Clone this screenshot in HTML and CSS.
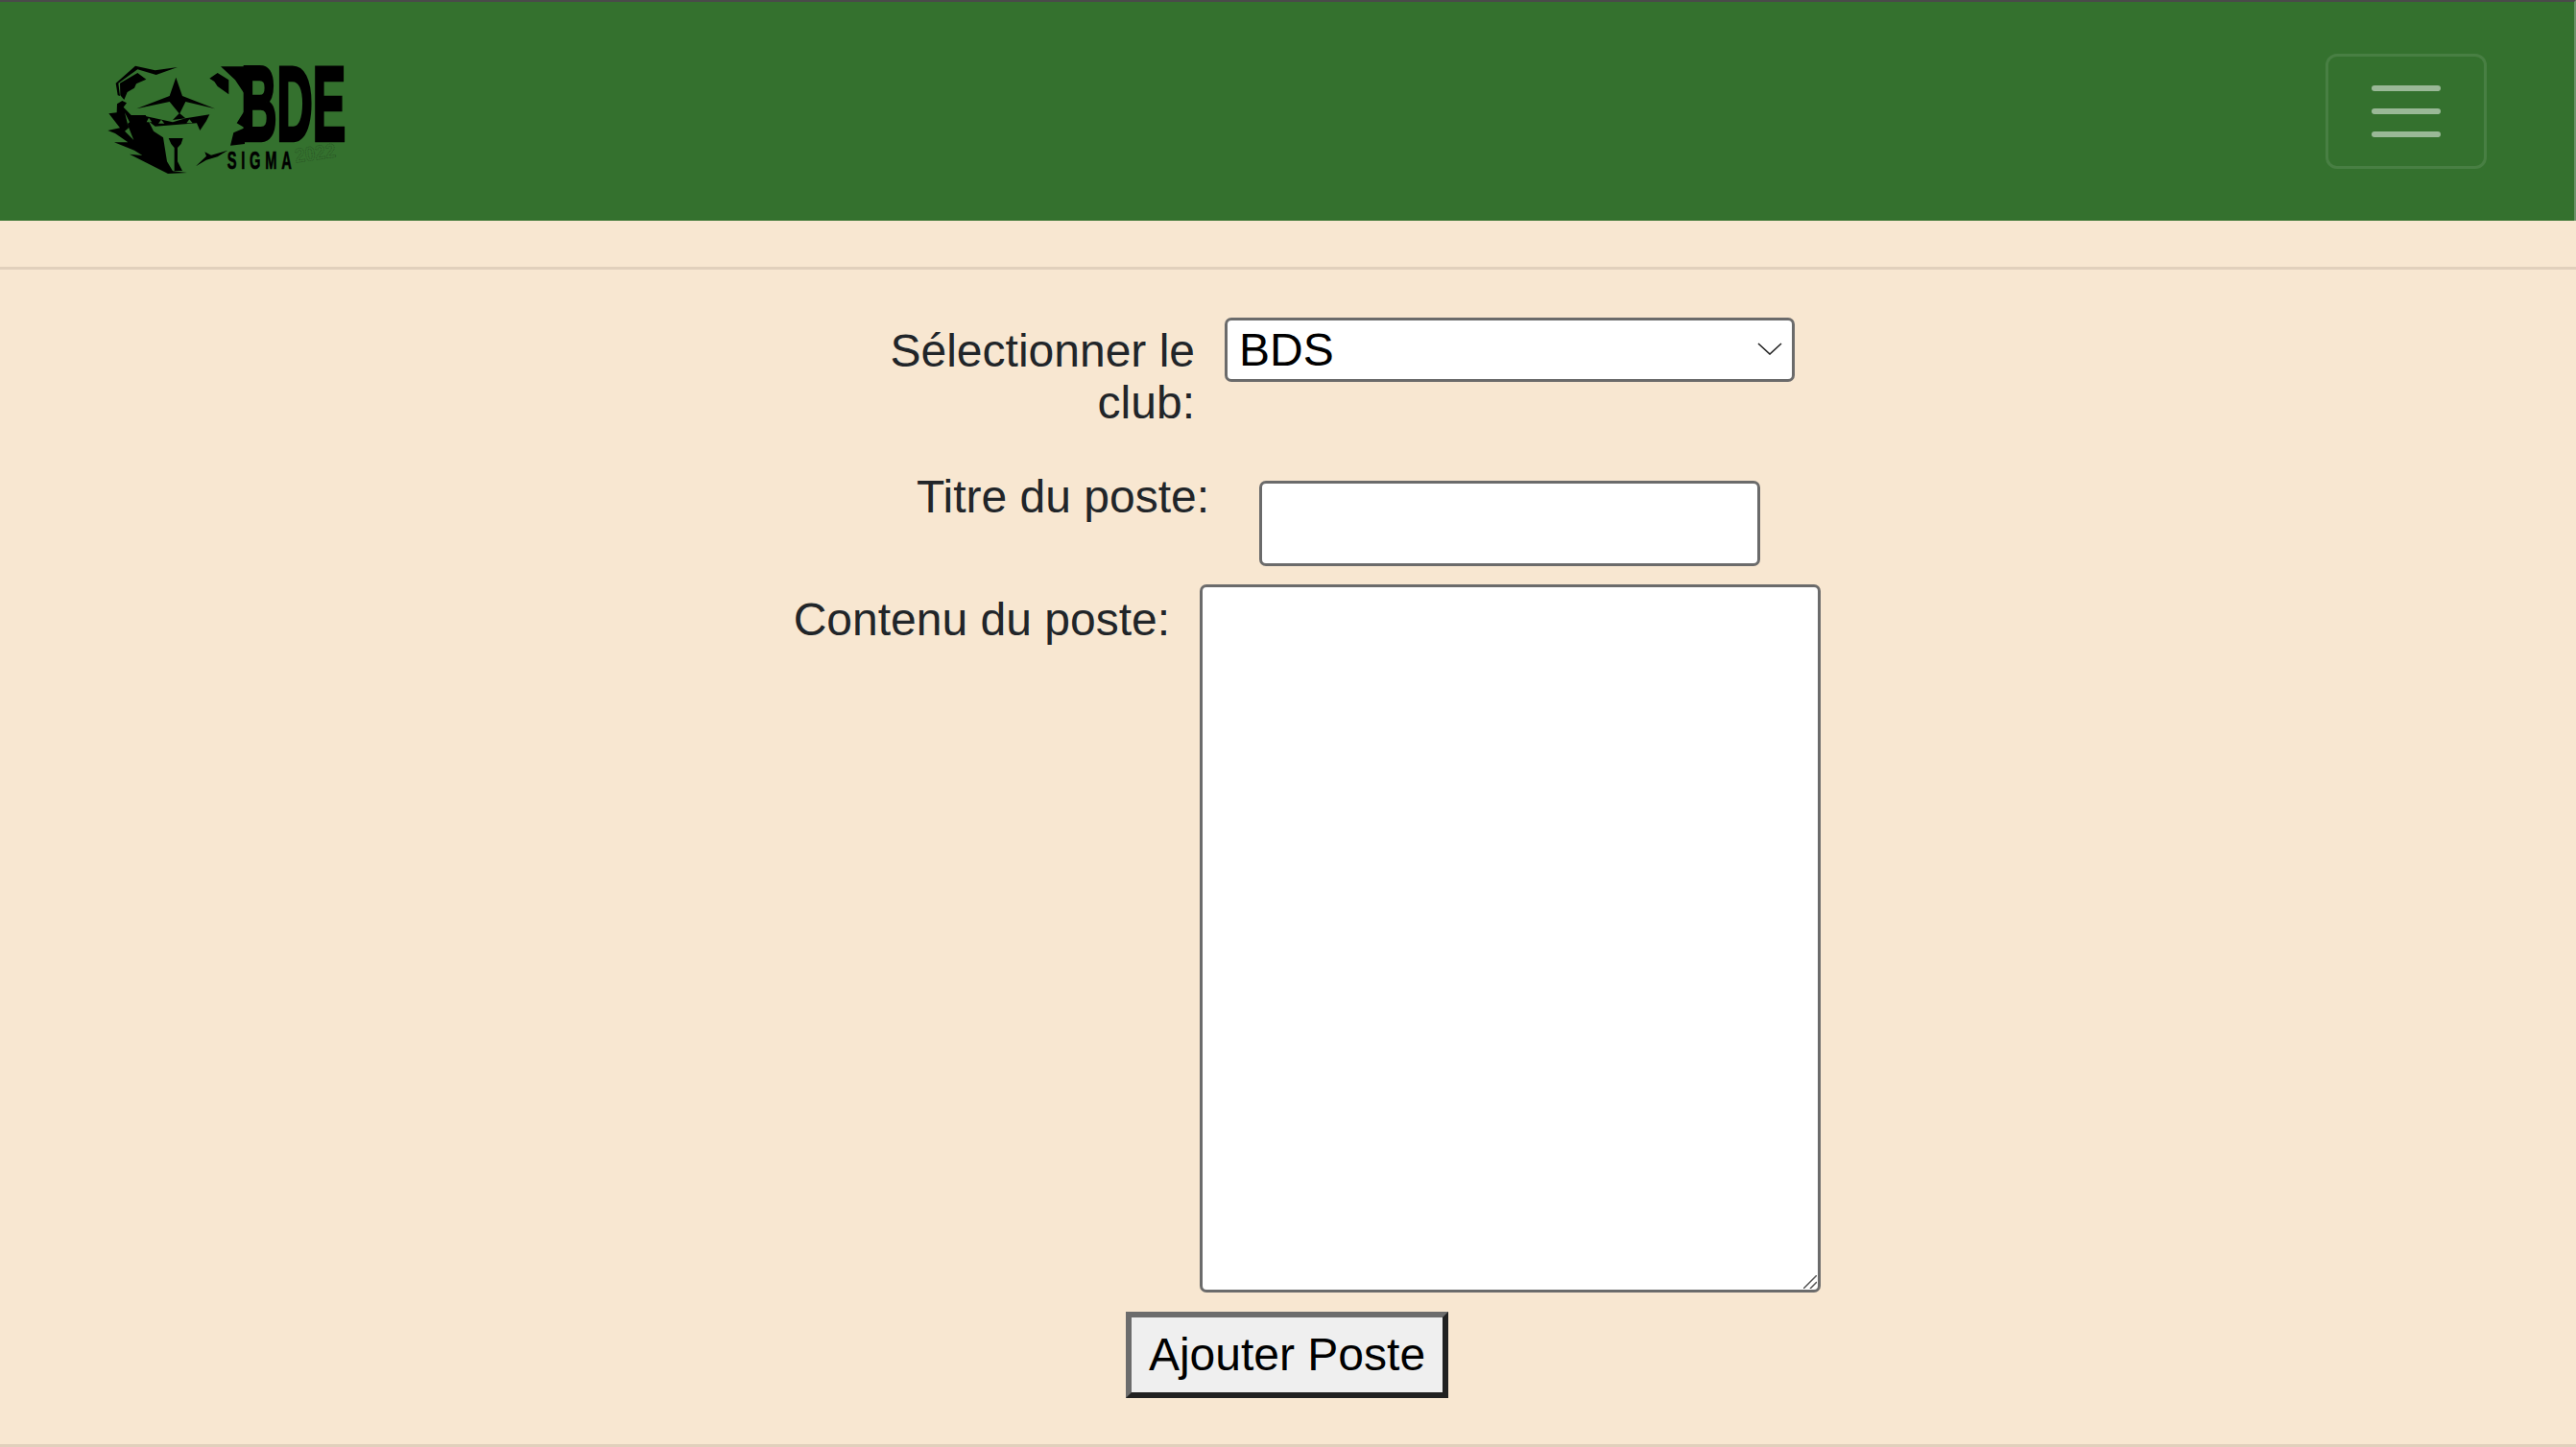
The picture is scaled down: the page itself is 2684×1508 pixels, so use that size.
FILE: index.html
```html
<!DOCTYPE html>
<html lang="fr">
<head>
<meta charset="utf-8">
<title>Ajouter Poste</title>
<link rel="stylesheet" href="styles.css">
</head>
<body>
<nav class="navbar">
  <a class="brand" href="#" aria-label="BDE Sigma">
    <svg class="logo" viewBox="0 0 960 480" width="320" height="160">
      <polygon points="122,140 183,86 245,100 315,90 248,114 190,97 130,140 135,180 128,178"/>
      <polygon points="135,140 190,108 217,128 186,142 180,155 158,168 148,192 136,178"/>
      <polygon points="126,205 142,195 156,202 146,215 170,240 215,240 240,290 270,310 282,385 300,415 345,420 285,423 165,362 205,366 180,350 117,325 160,325 120,297 97,288 135,280 100,235 125,232"/>
      <polygon class="logo-gap" points="150,232 165,262 158,268 178,318 150,290 162,280"/>
      <polygon points="310,122 330,180 432,220 340,198 322,235 340,250 300,255 320,235 290,198 187,220 290,180"/>
      <polygon points="200,240 245,250 300,262 340,250 415,238 405,258 385,288 375,265 310,270 245,275"/>
      <polygon class="logo-gap" points="225,248 235,262 218,262"/>
      <polygon class="logo-gap" points="264,254 274,266 255,266"/>
      <polygon class="logo-gap" points="352,253 362,265 343,265"/>
      <polygon points="287,312 332,312 326,330 315,342 315,385 330,414 305,414 305,342 295,330"/>
      <polygon points="415,125 440,108 475,130 475,175 440,150 430,135"/>
      <polygon points="372,400 405,368 400,355 420,365 472,350 440,370 405,380"/>
      <polygon points="450,88 525,88 525,175 495,130"/>
      <polygon points="490,295 525,280 500,265 525,225 525,330 480,335"/>
      <text class="logo-bde" x="514" y="319" textLength="326" lengthAdjust="spacingAndGlyphs">BDE</text>
      <text class="logo-sigma" transform="translate(470 408) scale(.55 1)">SIGMA</text>
      <text class="logo-year" x="682" y="380" textLength="128" lengthAdjust="spacingAndGlyphs" transform="rotate(-8 745 365)">2022</text>
    </svg>
  </a>
  <button class="toggler" type="button" aria-label="Menu">
    <span class="bar"></span><span class="bar"></span><span class="bar"></span>
  </button>
</nav>
<hr class="rule rule-top">
<form class="post-form">
  <div class="row row-club">
    <label class="field-label label-club" for="club">Sélectionner le club:</label>
    <div class="select-wrap">
      <select id="club" class="select"><option>BDS</option></select>
      <svg class="chevron" viewBox="0 0 26 13" width="26" height="13"><path d="M1 1 L13 12 L25 1" fill="none" stroke="#222" stroke-width="1.6"/></svg>
    </div>
  </div>
  <div class="row row-title">
    <label class="field-label label-title" for="titre">Titre du poste:</label>
    <input id="titre" class="text-input" type="text">
  </div>
  <div class="row row-content">
    <label class="field-label label-content" for="contenu">Contenu du poste:</label>
    <div class="textarea-wrap">
      <textarea id="contenu" class="textarea"></textarea>
      <svg class="grip" viewBox="0 0 14 14" width="14" height="14"><path d="M0 14 L14 0 M7 14 L14 7" fill="none" stroke="#555" stroke-width="1.5"/></svg>
    </div>
  </div>
  <div class="actions">
    <button class="submit" type="submit">Ajouter Poste</button>
  </div>
</form>
<hr class="rule rule-bottom">
</body>
</html>
```
FILE: styles.css
```css
* { box-sizing: border-box; }
html, body { margin: 0; height: 100%; }
body {
  background: #f8e7d1;
  color: #212529;
  font-family: "Liberation Sans", Arial, sans-serif;
  font-size: 48px;
  line-height: 54px;
  overflow: hidden;
}
.navbar {
  display: flex;
  align-items: center;
  justify-content: space-between;
  height: 230px;
  padding: 0 91px 0 80px;
  background: #34712e;
  border-top: 2px solid #4a4a4a;
  border-right: 2px solid #6b9268;
}
.brand { display: flex; margin-top: 8px; }
.logo { display: block; fill: #000; overflow: visible; }
.logo-gap { fill: #34712e; }
.logo-bde {
  font-family: "Liberation Sans", sans-serif;
  font-weight: 700;
  font-size: 327px;
  stroke: #000;
  stroke-width: 13;
}
.logo-sigma {
  font-family: "Liberation Sans", sans-serif;
  font-weight: 700;
  font-size: 80px;
  letter-spacing: 26px;
  stroke: #000;
  stroke-width: 2;
}
.logo-year {
  font-family: "Liberation Sans", sans-serif;
  font-weight: 700;
  font-size: 62px;
  fill: none;
  stroke: #1e3a1c;
  stroke-width: 2;
  stroke-dasharray: 2 3;
}
.toggler {
  display: flex;
  flex-direction: column;
  align-items: center;
  justify-content: center;
  gap: 18px;
  width: 168px;
  height: 120px;
  padding: 0;
  background: transparent;
  border: 3px solid rgba(255, 255, 255, 0.1);
  border-radius: 12px;
}
.bar {
  display: block;
  width: 72px;
  height: 6px;
  border-radius: 3px;
  background: rgba(255, 255, 255, 0.5);
}
.rule {
  display: block;
  height: 3px;
  margin: 0;
  border: 0;
  background: #e1d0bc;
}
.rule-top { margin-top: 48px; }
.rule-bottom { margin-top: 48px; }
.post-form { display: block; padding-top: 50px; }
.row { display: flex; align-items: flex-start; }
.row-club { padding-right: 814px; }
.row-title { padding-right: 850px; margin-top: 43px; }
.row-content { padding-right: 787px; margin-top: 19px; }
.field-label { flex: 1; min-width: 0; text-align: right; }
.label-club { flex: 0 1 340px; margin: 8px 31px 0 auto; }
.label-title { margin: 1px 52px 0 0; }
.label-content { margin: 10px 31px 0 0; }
.select-wrap { position: relative; flex: 0 0 594px; height: 67px; }
.select {
  display: block;
  width: 100%;
  height: 67px;
  padding: 0 40px 0 12px;
  appearance: none;
  background: #fff;
  border: 3px solid #6b6b6b;
  border-radius: 7px;
  color: #000;
  font: inherit;
  line-height: 54px;
}
.chevron { position: absolute; top: 26px; right: 13px; }
.text-input {
  display: block;
  flex: 0 0 522px;
  min-width: 0;
  height: 89px;
  margin-top: 11px;
  padding: 0 11px;
  background: #fff;
  border: 3px solid #6b6b6b;
  border-radius: 7px;
  font: inherit;
}
.textarea-wrap { position: relative; flex: 0 0 647px; height: 738px; }
.textarea {
  display: block;
  width: 100%;
  height: 100%;
  padding: 3px 5px;
  resize: none;
  background: #fff;
  border: 3px solid #6b6b6b;
  border-radius: 7px;
  font: inherit;
}
.grip { position: absolute; right: 4px; bottom: 4px; }
.actions { display: flex; justify-content: center; margin-top: 20px; padding-right: 2px; }
.submit {
  height: 90px;
  padding: 0 18px;
  background: #efefef;
  border-style: solid;
  border-width: 6px;
  border-color: #6c6c6c #212121 #212121 #6c6c6c;
  color: #000;
  font: inherit;
  line-height: 54px;
}
```
